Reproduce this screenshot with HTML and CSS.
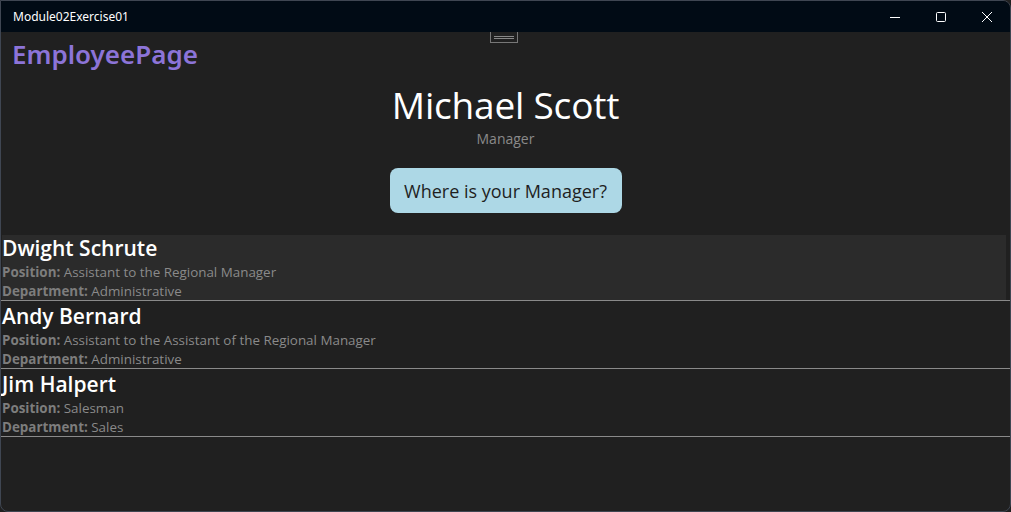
FILE: index.html
```html
<!DOCTYPE html>
<html>
<head>
<meta charset="utf-8">
<link rel="stylesheet" href="styles.css">
</head>
<body>
<div class="window">
  <div class="titlebar">
    <span class="app-title">Module02Exercise01</span>
    <div class="controls">
      <span class="ctl"><svg width="12" height="12" viewBox="0 0 12 12"><path d="M1 6.5h10" stroke="#fff" stroke-width="1"/></svg></span>
      <span class="ctl"><svg width="12" height="12" viewBox="0 0 12 12"><rect x="1.5" y="1.5" width="9" height="9" rx="1" fill="none" stroke="#fff" stroke-width="1"/></svg></span>
      <span class="ctl"><svg width="12" height="12" viewBox="0 0 12 12"><path d="M1 1L11 11M11 1L1 11" stroke="#fff" stroke-width="1"/></svg></span>
    </div>
  </div>
  <div class="content">
    <div class="handle"><span class="hline"></span><span class="hline"></span></div>
    <div class="page-title">EmployeePage</div>
    <div class="hero">
      <div class="hero-name">Michael Scott</div>
      <div class="hero-role">Manager</div>
      <button class="mgr-btn">Where is your Manager?</button>
    </div>
    <div class="list">
      <div class="item selected">
        <div class="name">Dwight Schrute</div>
        <div class="detail"><b>Position:</b> Assistant to the Regional Manager</div>
        <div class="detail"><b>Department:</b> Administrative</div>
      </div>
      <div class="item">
        <div class="name">Andy Bernard</div>
        <div class="detail"><b>Position:</b> Assistant to the Assistant of the Regional Manager</div>
        <div class="detail"><b>Department:</b> Administrative</div>
      </div>
      <div class="item">
        <div class="name">Jim Halpert</div>
        <div class="detail"><b>Position:</b> Salesman</div>
        <div class="detail"><b>Department:</b> Sales</div>
      </div>
    </div>
  </div>
</div>
</body>
</html>
```

FILE: styles.css
```css
html, body {
  margin: 0;
  padding: 0;
  background: #202020;
  width: 1011px;
  height: 512px;
  overflow: hidden;
}
.window {
  box-sizing: border-box;
  width: 1011px;
  height: 512px;
  border: 1px solid #3f4652;
  border-radius: 0 8px 8px 8px;
  overflow: hidden;
  background: #202020;
  display: flex;
  flex-direction: column;
  font-family: "Open Sans", "Noto Sans", sans-serif;
}
.titlebar {
  height: 31px;
  flex: none;
  background: #010b15;
  display: flex;
  align-items: center;
  justify-content: space-between;
}
.app-title {
  font-family: "Noto Sans", "Open Sans", sans-serif;
  font-size: 12px;
  color: #fff;
  padding-left: 12px;
}
.controls {
  display: flex;
  height: 100%;
}
.ctl {
  width: 46px;
  display: flex;
  align-items: center;
  justify-content: center;
}
.content {
  flex: 1;
  display: flex;
  flex-direction: column;
  position: relative;
}
.handle {
  position: absolute;
  left: 489px;
  top: 0;
  width: 28px;
  height: 11px;
  border: 1px solid #777;
  border-top: none;
  box-sizing: border-box;
  display: flex;
  flex-direction: column;
  justify-content: center;
  align-items: center;
  gap: 1px;
}
.hline {
  display: block;
  width: 20px;
  height: 1px;
  background: #888;
}
.page-title {
  font-family: "Noto Sans", "Open Sans", sans-serif;
  font-weight: 600;
  font-size: 26px;
  color: #8c74d8;
  padding-left: 11px;
  line-height: 44px;
  height: 44px;
}
.hero {
  display: flex;
  flex-direction: column;
  align-items: center;
  padding-top: 7px;
}
.hero-name {
  font-size: 37px;
  color: #fff;
  line-height: 44px;
  letter-spacing: -0.2px;
}
.hero-role {
  font-size: 14px;
  color: #8a8a8a;
  line-height: 20px;
  margin-top: 2px;
}
.mgr-btn {
  margin-top: 19px;
  background: #add8e6;
  border: none;
  border-radius: 8px;
  font-family: "Open Sans", sans-serif;
  font-size: 18px;
  color: #1f1f1f;
  padding: 0 14px;
  height: 45px;
  width: 232px;
}
.list {
  margin-top: 20px;
  display: flex;
  flex-direction: column;
}
.item {
  height: 65px;
  box-sizing: content-box;
  padding: 2px 4px 0 1px;
  border-bottom: 1px solid #8a8a8a;
  display: flex;
  flex-direction: column;
}
.item.selected {
  background: #2b2b2b;
  background-clip: content-box;
}
.name {
  font-size: 21px;
  font-weight: 600;
  color: #fff;
  line-height: 26px;
  margin-bottom: 2px;
}
.detail {
  font-size: 13.4px;
  color: #8a8a8a;
  line-height: 19px;
}
.detail b {
  font-weight: 700;
  color: #7d7d7d;
}
```
